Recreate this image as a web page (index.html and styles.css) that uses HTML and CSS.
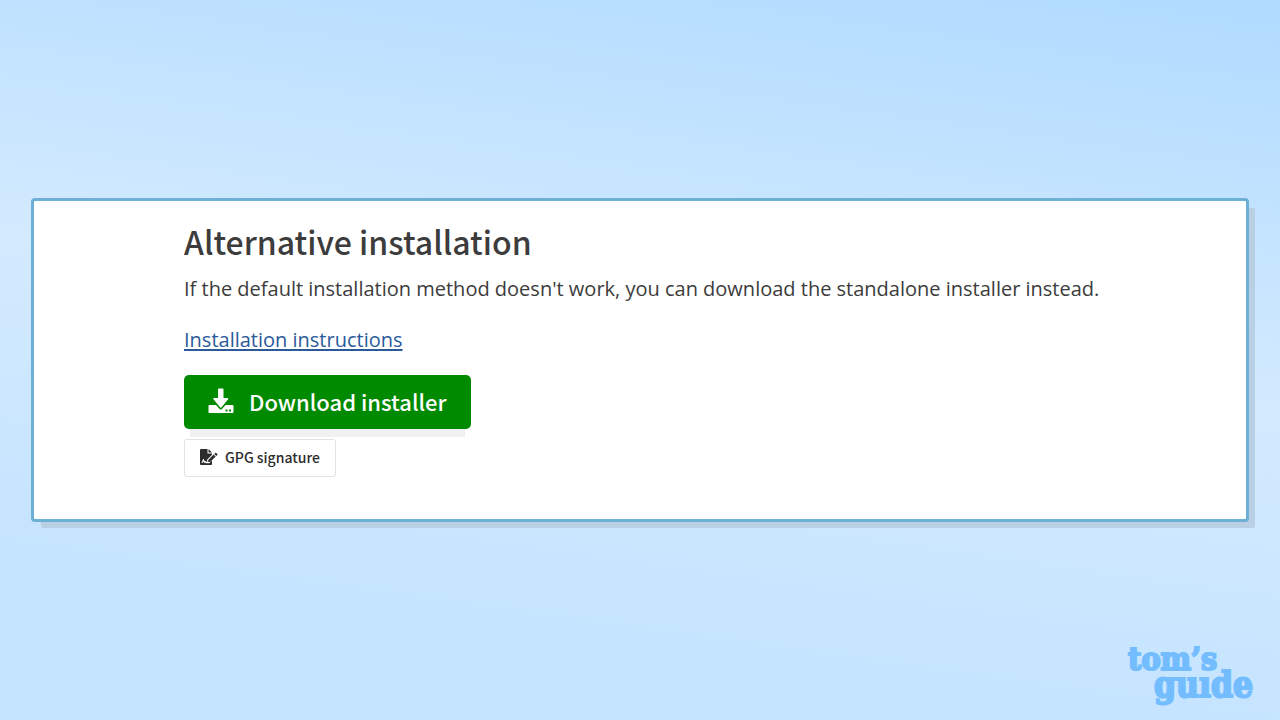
FILE: index.html
```html
<!DOCTYPE html>
<html lang="en">
<head>
  <meta charset="UTF-8" />
  <meta name="viewport" content="width=device-width, initial-scale=1.0"/>
  <title>Alternative installation</title>
  <link rel="stylesheet" href="styles.css">
</head>
<body>

  <main class="card">
    <h1>Alternative installation</h1>
    <p class="intro">If the default installation method doesn't work, you can download the standalone installer instead.</p>
    <a class="instructions" href="#">Installation instructions</a>

    <div class="downloads">
      <button class="btn download" type="button">
        <svg class="download-icon" viewBox="0 0 26 26" aria-hidden="true">
          <path d="M10 1.5Q10 .5 11 .5h3.500q1 0 1 1V10h4q1.400 0 .6 1.200l-6.500 8q-.8.9-1.600 0l-6.500-8Q4.600 10 6 10h4z"/>
          <path d="M1.500 17H8l3.600 4q1.200 1.200 2.400 0l3.600-4h6.900q1 0 1 1v6q0 1-1 1h-23q-1 0-1-1v-6q0-1 1-1zM17.500 21.500v2h2v-2zM21 21.500v2h2v-2z" fill-rule="evenodd"/>
        </svg>
        Download installer
      </button>
      <button class="btn signature" type="button">
        <svg class="signature-icon" viewBox="0 0 18 16" aria-hidden="true">
          <path d="M1 0h6.500v4.500h4.500v1.200L7.200 10.500v2.300H6.300c-.4-.8-1.200-1-1.700-.5L4 10.500c-.2-.6-1-.6-1.200 0l-.7 2.200H1.500v1H3l.5-1.500.8 1.600c.2.300.6.300.8 0 .2-.3.4-.2.6.2l.3.300h3.200l2.800-2.800V15q0 1-1 1H1q-1 0-1-1V1q0-1 1-1z"/>
          <path d="M8.500 0l3.500 3.500H8.500z"/>
          <path d="M8.200 11l5.400-5.400 2 2-5.400 5.400h-2zM14.300 4.900l.9-.9q.5-.5 1 0l1.100 1.100q.5.500 0 1l-.9.900z"/>
        </svg>
        GPG signature
      </button>
    </div>
  </main>

  <div class="logo">
    <span>tom’s</span>
    <span class="logo-guide">guıde</span>
  </div>

</body>
</html>
```

FILE: styles.css
```css
* {
  box-sizing: border-box;
}

body {
  position: relative;
  display: flex;
  flex-direction: column;
  justify-content: center;
  margin: 0;
  padding: 31px;
  min-height: 100vh;
  font-family: "Open Sans", sans-serif;
  color: #3c3c3c;
  background: linear-gradient(188deg, #b0dbff 0%, #d3eaff 46%, #c3e3ff 87%, #c3e3ff 100%);
}

.card {
  padding: 15px 80px 42px 150px;
  background: #fff;
  border: 3px solid #6db0d6;
  border-radius: 4px;
  box-shadow: 8px 8px 0 -2px #b9cfe4;
}

h1 {
  margin: 0;
  font-family: "Noto Sans CJK SC", sans-serif;
  font-size: 32px;
  font-weight: 500;
  line-height: 50px;
}

.intro {
  margin: 7px 0 19px;
  font-size: 20px;
  line-height: 32px;
}

.instructions {
  font-size: 20px;
  line-height: 32px;
  color: #2a5a9a;
  text-underline-offset: 2px;
}

.downloads {
  display: flex;
  flex-direction: column;
  align-items: flex-start;
  gap: 10px;
  margin-top: 19px;
}

.btn {
  display: flex;
  align-items: center;
  border: none;
  font-family: "Noto Sans CJK SC", sans-serif;
  font-weight: 500;
  cursor: pointer;
}

.download {
  gap: 15px;
  height: 54px;
  padding: 0 24px 2px;
  border-radius: 5px;
  font-size: 22px;
  color: #fff;
  background: #008a00;
  box-shadow: 0 14px 0 -6px #f1f1f1;
}

.download-icon {
  width: 26px;
  height: 26px;
  fill: #fff;
}

.signature {
  gap: 7px;
  height: 38px;
  padding: 0 15px 2px;
  border: 1px solid #e2e2e2;
  border-radius: 3px;
  font-size: 14px;
  color: #2c2c2c;
  background: #fff;
}

.signature-icon {
  width: 18px;
  height: 16px;
  fill: #2c2c2c;
}

.logo {
  position: absolute;
  right: 27px;
  bottom: 22px;
  display: flex;
  flex-direction: column;
  font-family: "DejaVu Serif Condensed", "DejaVu Serif", serif;
  font-size: 32px;
  font-weight: bold;
  line-height: 26px;
  color: #73bdff;
  -webkit-text-stroke: 2px #73bdff;
}

.logo-guide {
  margin-left: 26px;
  font-size: 35px;
}
```
